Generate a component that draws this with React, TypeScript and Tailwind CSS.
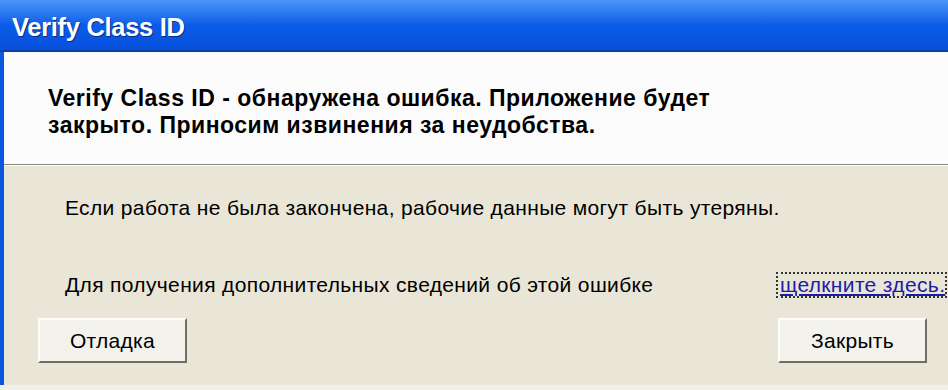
import React from 'react';

const font = { fontFamily: '"Liberation Sans", "DejaVu Sans", sans-serif' };

const XpButton: React.FC<{ label: string }> = ({ label }) => (
  <button
    className="w-[149px] h-[45px] bg-[#f3f2ec] border-2 border-t-[#fdfdfb] border-l-[#fdfdfb] border-r-[#6f6d64] border-b-[#6f6d64] text-[21px] tracking-[0.3px] text-black flex items-center justify-center"
    style={font}
  >
    {label}
  </button>
);

export default function App() {
  return (
    <div className="w-[948px] h-[390px] overflow-hidden flex flex-col bg-[#f1efe6]" style={font}>
      {/* title bar */}
      <div className="h-[52px] shrink-0 flex items-center pl-[12px] pt-[5px] bg-gradient-to-b from-[#4a95f8] via-[#0a5ce8] to-[#0750dc] border-b-2 border-[#0a3fa8]">
        <span className="text-white font-bold text-[25.5px] tracking-[-0.3px] [text-shadow:1px_1px_0_#0a2a80]">
          Verify Class ID
        </span>
      </div>

      <div className="h-[333px] shrink-0 flex border-l-4 border-[#0b57e0] bg-[#e9e6d7]">
        <div className="flex-1 flex flex-col">
          {/* white header */}
          <div className="h-[113px] shrink-0 bg-[#fbfbfb] pl-[44px] pt-[33px] border-b border-[#8a887e]">
            <p className="font-bold text-[23px] tracking-[0.5px] leading-[27px] text-black">
              Verify Class ID - обнаружена ошибка. Приложение будет
              <br />
              закрыто. Приносим извинения за неудобства.
            </p>
          </div>
          <div className="h-px bg-white" />

          {/* body */}
          <div className="flex-1 flex flex-col pl-[61px] pt-[29px] text-black">
            <p className="text-[21px] tracking-[0.35px] leading-[26px]">
              Если работа не была закончена, рабочие данные могут быть утеряны.
            </p>
            <div className="flex items-center mt-[51px] h-[26px]">
              <p className="text-[21px] tracking-[0.35px] leading-[26px] w-[713px] shrink-0">
                Для получения дополнительных сведений об этой ошибке
              </p>
              <a className="text-[21px] tracking-[0.35px] leading-[22px] text-[#1c1ca8] underline outline-2 outline-dotted outline-[#333] outline-offset-0 whitespace-nowrap pl-[2px]">
                щелкните здесь.
              </a>
            </div>
            <div className="flex justify-between mt-[20px] -ml-[27px] mr-[21px]">
              <XpButton label="Отладка" />
              <XpButton label="Закрыть" />
            </div>
          </div>
        </div>
      </div>
    </div>
  );
}
